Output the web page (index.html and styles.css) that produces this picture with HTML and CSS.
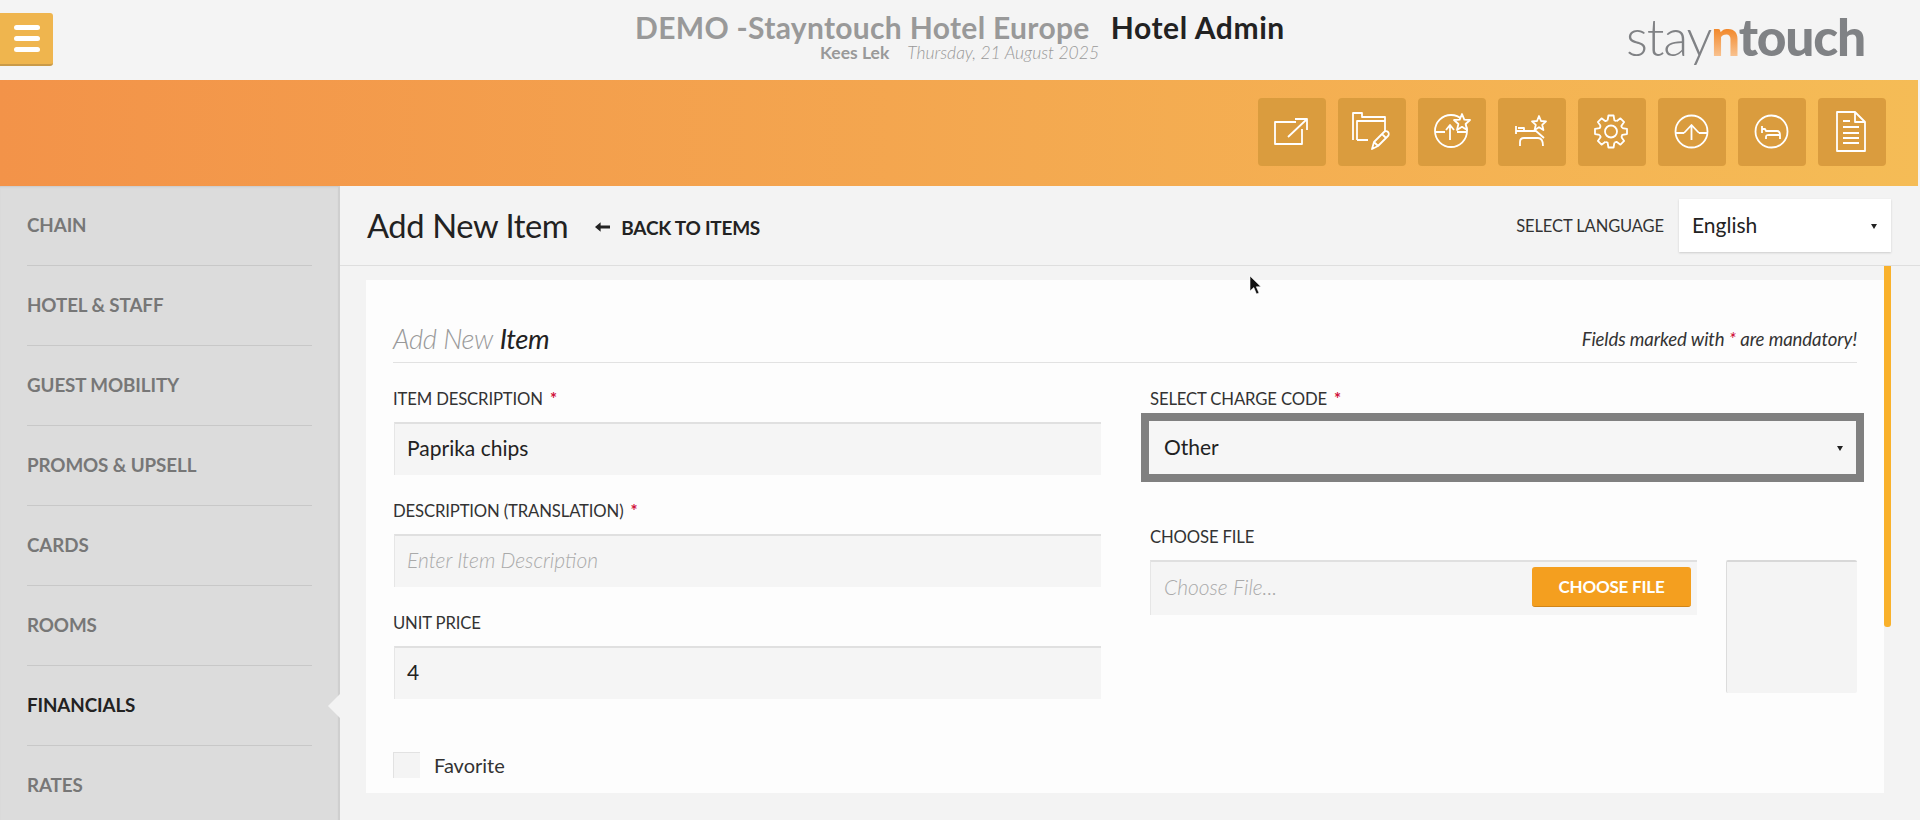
FILE: index.html
```html
<!DOCTYPE html>
<html lang="en">
<head>
<meta charset="utf-8">
<title>Add New Item</title>
<link rel="stylesheet" href="styles.css">
</head>
<body>
<header class="topbar">
  <button class="menu-btn" type="button" aria-label="Menu"><span></span><span></span><span></span></button>
  <div class="top-center">
    <div class="top-title"><span class="hotel-name">DEMO -Stayntouch Hotel Europe</span><span class="app-name">Hotel Admin</span></div>
    <div class="top-sub"><span class="user-name">Kees Lek</span><span class="top-date">Thursday, 21 August 2025</span></div>
  </div>
  <div class="logo"><span class="logo-stay">stay</span><span class="logo-n">n</span><span class="logo-touch">touch</span></div>
</header>

<div class="band">
  <a class="tile"><svg viewBox="0 0 68 68"><path d="M38 24H17V46H44V31M30 39L48 22M37 21H49V32"/></svg></a>
  <a class="tile"><svg viewBox="0 0 68 68"><path d="M15 42V15H24V19H47V33M19 42H30M19 42V23H47M24 15V19"/><path d="M34 51L36 44L46 34C47 33 49 33 50 34C51 35 51 37 50 38L40 48ZM36 44L40 48M44 36L48 40"/></svg></a>
  <a class="tile"><svg viewBox="0 0 68 68"><circle cx="33" cy="33" r="16"/><path d="M17 34H27M39 34H49M32 27V42M28 32L32 27L36 32"/><path class="star" d="M44 16L46.300 21.600L52 22L47.600 26L49 32L44 28.800L39 32L40.400 26L36 22L41.700 21.600Z"/></svg></a>
  <a class="tile"><svg viewBox="0 0 68 68"><path d="M18 28V36M18 33H38L46 40M20 30H26V33M22 48V44C22 41 24 40 26 40H40C43 40 45 42 45 48"/><path class="star" d="M41 18L43 23L48 23.400L44.200 26.800L45.400 32L41 29.200L36.600 32L37.800 26.800L34 23.400L39 23Z"/></svg></a>
  <a class="tile"><svg viewBox="0 0 68 68"><defs><path id="tooth" d="M-3.400-11.200L-2.600-16H2.600L3.400-11.200A11.700 11.700 0 0 1 5.500-10.300"/></defs><g transform="translate(33 33.500)"><use href="#tooth"/><use href="#tooth" transform="rotate(45)"/><use href="#tooth" transform="rotate(90)"/><use href="#tooth" transform="rotate(135)"/><use href="#tooth" transform="rotate(180)"/><use href="#tooth" transform="rotate(225)"/><use href="#tooth" transform="rotate(270)"/><use href="#tooth" transform="rotate(315)"/><circle r="6"/></g></svg></a>
  <a class="tile"><svg viewBox="0 0 68 68"><circle cx="33.500" cy="33.500" r="16"/><path d="M17.500 35H26M41 35H49.500M33.500 27V42M26 35L33.500 27L41 35"/></svg></a>
  <a class="tile"><svg viewBox="0 0 68 68"><circle cx="33.500" cy="33.500" r="16"/><path d="M24 28V35M24 31H27L28 33H39C41 33 42 35 42 37V41M28 41V39C28 37 29 37 31 37H42"/></svg></a>
  <a class="tile"><svg viewBox="0 0 68 68"><path d="M19 14H37L47 24V53H19ZM37 14V24H47M25 23H32M25 29H41M25 35H41M25 40H41M25 45H41"/></svg></a>
</div>

<div class="layout">
  <nav class="sidebar">
    <a class="nav-item">CHAIN</a>
    <a class="nav-item">HOTEL &amp; STAFF</a>
    <a class="nav-item">GUEST MOBILITY</a>
    <a class="nav-item">PROMOS &amp; UPSELL</a>
    <a class="nav-item">CARDS</a>
    <a class="nav-item">ROOMS</a>
    <a class="nav-item active">FINANCIALS</a>
    <a class="nav-item">RATES</a>
  </nav>

  <main class="main">
    <div class="page-head">
      <h1 class="page-title">Add New Item</h1>
      <a class="back-link"><svg class="back-arrow" viewBox="0 0 16 12"><path d="M0 6L6 1V4.500H16V7.500H6V11Z"/></svg>BACK TO ITEMS</a>
      <div class="lang">
        <span class="lang-label">SELECT LANGUAGE</span>
        <div class="lang-select">English<i class="caret"></i></div>
      </div>
    </div>

    <section class="card">
      <div class="card-head">
        <h2 class="card-title"><em class="muted">Add New</em> <em>Item</em></h2>
        <p class="mandatory">Fields marked with <span class="req">*</span> are mandatory!</p>
      </div>
      <div class="form-grid">
        <div class="col">
          <label class="field-label">ITEM DESCRIPTION <span class="req">*</span></label>
          <div class="input">Paprika chips</div>
          <label class="field-label">DESCRIPTION (TRANSLATION) <span class="req">*</span></label>
          <div class="input placeholder">Enter Item Description</div>
          <label class="field-label">UNIT PRICE</label>
          <div class="input">4</div>
          <div class="check-row"><span class="check"></span><span class="check-text">Favorite</span></div>
        </div>
        <div class="col">
          <label class="field-label select-label">SELECT CHARGE CODE <span class="req">*</span></label>
          <div class="input focused">Other<i class="caret"></i></div>
          <label class="field-label file-label">CHOOSE FILE</label>
          <div class="file-row">
            <div class="file-input"><span class="placeholder">Choose File...</span><button class="file-btn" type="button">CHOOSE FILE</button></div>
            <div class="preview"></div>
          </div>
        </div>
      </div>
    </section>
    <div class="scroll-thumb"></div>
    <svg class="cursor" viewBox="0 0 14 20"><path d="M1 1V16L4.800 12.600L7.500 19L10 18L7.300 11.800H12Z"/></svg>
  </main>
</div>
</body>
</html>
```

FILE: styles.css
```css
* { box-sizing: border-box; }
html, body { height: 100%; }
body {
  margin: 0;
  height: 820px;
  overflow: hidden;
  background: #f3f3f3;
  color: #222;
  font-family: Lato, "Open Sans", sans-serif;
}

/* top bar */
.topbar {
  height: 80px;
  display: flex;
  position: relative;
  background: #f4f4f4;
}
.menu-btn {
  width: 53px;
  height: 53px;
  margin-top: 13px;
  padding: 0 13px 0 14px;
  display: flex;
  flex-direction: column;
  justify-content: center;
  gap: 6px;
  border: 0;
  border-bottom: 2px solid #c99a48;
  border-radius: 0 3px 3px 0;
  background: #efb54e;
}
.menu-btn span { height: 5px; border-radius: 3px; background: #fff; }
.top-center {
  margin-left: 582px;
  width: 661px;
  padding-top: 10px;
}
.top-title {
  display: flex;
  gap: 21px;
  font-size: 30px;
  line-height: 34px;
  font-weight: 700;
  letter-spacing: .32px;
}
.hotel-name { color: #999; }
.app-name { color: #222; letter-spacing: .6px; }
.top-sub {
  display: flex;
  gap: 18px;
  margin-left: 185px;
  margin-top: -1px;
  font-size: 17.500px;
  line-height: 20px;
  color: #999;
}
.user-name { font-weight: 700; }
.top-date { font-style: italic; font-weight: 300; }
.logo {
  margin-left: 330px;
  padding-top: 4px;
  font-size: 51.500px;
  line-height: 64px;
  letter-spacing: -1.200px;
  color: #808285;
  white-space: nowrap;
}
.logo-stay { font-weight: 300; }
.logo-n, .logo-touch { font-weight: 900; }
.logo-n {
  color: transparent;
  background: linear-gradient(#f28a2e 40%, #fbd9b8);
  -webkit-background-clip: text;
  background-clip: text;
}

/* orange band */
.band {
  height: 106px;
  width: 1918px;
  padding: 18px 32px 0 0;
  display: flex;
  justify-content: flex-end;
  gap: 12px;
  background: linear-gradient(90deg, #f39349, #f5bc56);
}
.tile {
  width: 68px;
  height: 68px;
  border-radius: 4px;
  background: #da9c3e;
}
.tile svg { display: block; width: 68px; height: 68px; }
.tile svg * { fill: none; stroke: #fff; stroke-width: 1.800; stroke-linejoin: round; }
.tile svg .star { fill: #da9c3e; }

/* page layout */
.layout { display: flex; height: 634px; }
.sidebar {
  width: 340px;
  flex: none;
  padding: 0 26px 0 27px;
  background: #dcdcdc;
  border-right: 2px solid #cfcfcf;
  box-shadow: inset 0 2px 2px -1px #c9c9c9;
}
.nav-item {
  height: 80px;
  display: flex;
  align-items: center;
  padding-bottom: 3px;
  border-bottom: 1px solid #c8c8c8;
  font-size: 18.800px;
  font-weight: 700;
  letter-spacing: -.1px;
  color: #777;
  position: relative;
}
.nav-item:last-child { border-bottom: 0; }
.nav-item.active { color: #222; }
.nav-item.active::after {
  content: "";
  position: absolute;
  right: -28px;
  top: 28px;
  border: 12px solid transparent;
  border-right-color: #f3f3f3;
  border-left-width: 0;
}

.main { flex: 1; position: relative; }
.page-head {
  height: 80px;
  padding: 0 29px 0 27px;
  display: flex;
  align-items: center;
  border-bottom: 1px solid #dedede;
}
.page-title {
  margin: 0 27px 0 0;
  font-size: 32.700px;
  font-weight: 400;
  letter-spacing: -.4px;
  color: #222;
}
.back-link {
  display: flex;
  align-items: center;
  gap: 11px;
  margin-top: 3px;
  font-size: 19px;
  font-weight: 700;
  letter-spacing: -.25px;
  color: #222;
}
.back-arrow { width: 15px; height: 12px; fill: #222; }
.lang { margin-left: auto; display: flex; align-items: center; gap: 15px; }
.lang-label { font-size: 16.500px; color: #333; letter-spacing: -.1px; }
.lang-select {
  position: relative;
  width: 212px;
  height: 53px;
  padding: 0 0 3px 13px;
  display: flex;
  align-items: center;
  font-size: 21px;
  background: #fff;
  box-shadow: 0 1px 2px #ccc;
}
.caret {
  position: absolute;
  right: 14px;
  top: 50%;
  margin-top: -2px;
  border: 3.500px solid transparent;
  border-top: 5px solid #222;
  border-bottom: 0;
}

/* card */
.card {
  width: 1518px;
  height: 513px;
  margin: 14px 0 0 26px;
  padding: 0 27px;
  background: #fdfdfd;
}
.card-head {
  height: 83px;
  padding-top: 35px;
  display: flex;
  justify-content: space-between;
  align-items: center;
  border-bottom: 1px solid #e2e2e2;
}
.card-title { margin: 0; font-size: 27.500px; font-weight: 400; color: #222; letter-spacing: -.4px; }
.card-title .muted { color: #999; font-weight: 300; }
.mandatory { margin: 0; font-size: 18.600px; font-style: italic; color: #333; letter-spacing: -.1px; }
.req { color: #d0103a; font-weight: 700; margin-left: 3px; }
.mandatory .req { margin-left: 0; font-weight: 400; }
.form-grid { display: grid; grid-template-columns: 707px 707px; column-gap: 50px; padding-top: 24px; }
.col { min-width: 0; }
.field-label {
  display: block;
  height: 24px;
  margin-bottom: 11px;
  font-size: 16.700px;
  line-height: 24px;
  color: #333;
  letter-spacing: -.15px;
}
.input {
  position: relative;
  width: 707px;
  height: 53px;
  margin: 0 0 24px 1px;
  padding: 0 0 4px 12px;
  display: flex;
  align-items: center;
  font-size: 21px;
  color: #222;
  background: #f5f5f5;
  border-top: 2px solid #e0e0e0;
  border-left: 1px solid #e6e6e6;
}
.placeholder { color: #aaa; font-style: italic; font-weight: 300; }
.check-row { display: flex; align-items: center; gap: 14px; margin: 53px 0 0 0; }
.check { width: 27px; height: 26px; background: #f4f4f4; border-top: 1px solid #e2e2e2; border-left: 1px solid #e2e2e2; }
.check-text { font-size: 20px; color: #333; margin-top: -1px; }

.select-label { margin-bottom: 10px; }
.focused {
  margin-left: -1px;
  border: 0;
  padding: 0 0 2px 15px;
  outline: 8px solid #808080;
  background: #f6f6f6;
}
.focused .caret { right: 13px; }
.file-label { margin-top: 51px; }
.file-row { display: flex; gap: 29px; }
.file-input {
  width: 547px;
  height: 55px;
  padding: 5px 6px 0 13px;
  display: flex;
  justify-content: space-between;
  font-size: 21px;
  background: #f5f5f5;
  border-top: 2px solid #e0e0e0;
  border-left: 1px solid #e6e6e6;
}
.file-input .placeholder { padding-top: 7px; }
.file-btn {
  width: 159px;
  height: 40px;
  border: 0;
  border-bottom: 1px solid #d18518;
  border-radius: 3px;
  background: #f49f1f;
  color: #fff;
  font: 700 17px Lato, sans-serif;
  letter-spacing: -.2px;
}
.preview {
  width: 131px;
  height: 133px;
  background: #f4f4f4;
  border-top: 2px solid #d8d8d8;
  border-left: 1px solid #dcdcdc;
  border-radius: 2px;
}

/* overlays */
.scroll-thumb {
  position: absolute;
  left: 1544px;
  top: 80px;
  width: 7px;
  height: 361px;
  border-radius: 0 0 3px 3px;
  background: #f9b12b;
}
.cursor {
  position: absolute;
  left: 909px;
  top: 89px;
  width: 14px;
  height: 20px;
  fill: #111;
  stroke: #fff;
  stroke-width: .6;
}
```
